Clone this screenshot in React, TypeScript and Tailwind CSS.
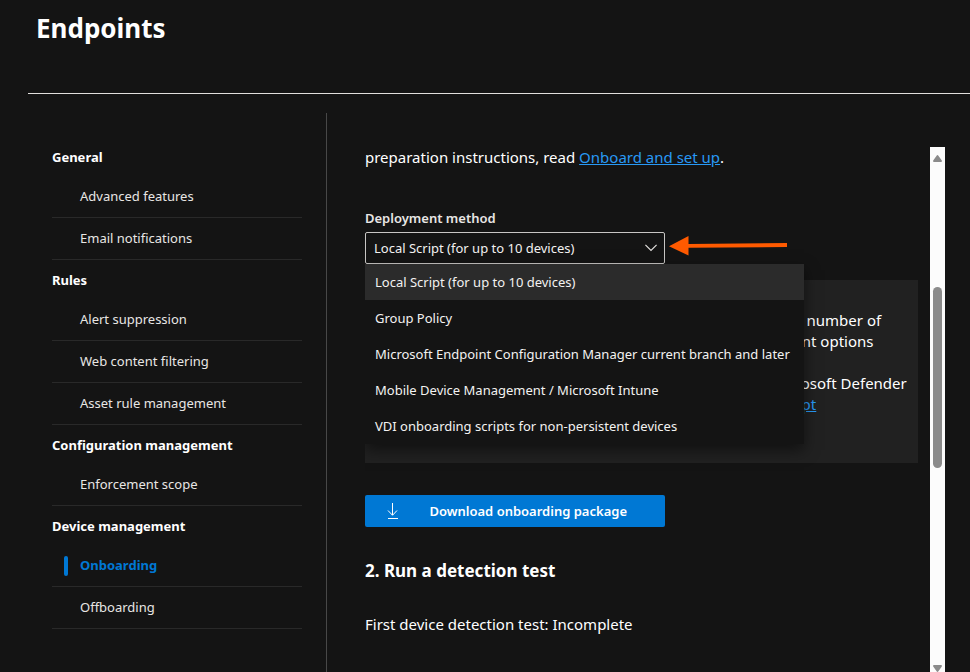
import { useState } from "react";

const navGroups = [
  { title: "General", items: ["Advanced features", "Email notifications"] },
  { title: "Rules", items: ["Alert suppression", "Web content filtering", "Asset rule management"] },
  { title: "Configuration management", items: ["Enforcement scope"] },
  { title: "Device management", items: ["Onboarding", "Offboarding"] },
];

const deploymentMethods = [
  "Local Script (for up to 10 devices)",
  "Group Policy",
  "Microsoft Endpoint Configuration Manager current branch and later",
  "Mobile Device Management / Microsoft Intune",
  "VDI onboarding scripts for non-persistent devices",
];

function SideNav({ active }: { active: string }) {
  return (
    <nav aria-label="Endpoint settings" className="w-[299px] shrink-0 border-r border-[#484848] px-6 pt-6">
      {navGroups.map((group) => (
        <section key={group.title}>
          <h2 className="flex h-[39px] items-center pt-0.5 text-[13px] font-bold text-white">{group.title}</h2>
          <ul>
            {group.items.map((item) => (
              <li key={item} className="flex h-[42px] items-center border-b border-[#292929]">
                {item === active ? (
                  <a href="#" aria-current="page" className="flex items-center gap-3 pl-3 font-bold text-[#0078d4]">
                    <span className="h-5 w-1 rounded-xs bg-[#0078d4]" />
                    {item}
                  </a>
                ) : (
                  <a href="#" className="pl-7 hover:text-white">{item}</a>
                )}
              </li>
            ))}
          </ul>
        </section>
      ))}
    </nav>
  );
}

function DeploymentPicker() {
  const [method, setMethod] = useState(deploymentMethods[0]);

  return (
    <div className="relative z-10 w-[300px] text-[13px]">
      <label htmlFor="method" className="block h-7 leading-7 font-semibold text-[#e8e6e4]">Deployment method</label>
      <div className="relative">
        <select
          id="method"
          value={method}
          onChange={(e) => setMethod(e.target.value)}
          className="block h-8 w-full appearance-none rounded-xs border border-[#c8c6c4] bg-[#141414] px-2 text-[#f3f2f1] outline-none"
        >
          {deploymentMethods.map((m) => (
            <option key={m}>{m}</option>
          ))}
        </select>
        <svg className="pointer-events-none absolute top-3 right-2 h-2 w-3" viewBox="0 0 12 8" fill="none" stroke="#e1dfdd" strokeWidth="1.2">
          <path d="M0.4 0.8 6 6.4 11.6 0.8" />
        </svg>
        <svg className="pointer-events-none absolute top-1 left-full h-5 w-[122px]" viewBox="0 0 122 20" fill="#ff5a00">
          <path d="M4 10.2 23.5 0V8L122 7V11L23.5 11.8V19.5Z" />
        </svg>
      </div>
      <ul role="listbox" aria-label="Deployment method" className="absolute top-full left-0 w-[439px] bg-[#141414] text-[#f3f2f1] shadow-[0_6px_14px_rgba(0,0,0,0.5)]">
        {deploymentMethods.map((m) => (
          <li key={m} role="option" aria-selected={m === method}>
            <button
              type="button"
              onClick={() => setMethod(m)}
              className={`block h-9 w-full px-[10px] text-left whitespace-nowrap ${m === method ? "bg-[#2b2b2b]" : "hover:bg-[#2b2b2b]"}`}
            >
              {m}
            </button>
          </li>
        ))}
      </ul>
    </div>
  );
}

function ScrollTrack() {
  return (
    <div aria-hidden="true" className="flex w-[15px] shrink-0 flex-col items-center bg-[#fcfcfc] pt-2">
      <svg className="h-[7px] w-[9px]" viewBox="0 0 9 7" fill="#8b8b8b">
        <path d="M4.5 0Q5 0 5.4 0.7L8.8 5.6Q9.3 7 8 7H1Q-.3 7 .2 5.6L3.6.7Q4 0 4.5 0Z" />
      </svg>
      <div className="mt-[125px] h-[181px] w-[9px] rounded-full bg-[#8b8b8b]" />
      <svg className="mt-auto h-[7px] w-[9px]" viewBox="0 0 9 7" fill="#8b8b8b">
        <path d="M4.5 7Q5 7 5.4 6.3L8.8 1.4Q9.3 0 8 0H1Q-.3 0 .2 1.4L3.6 6.3Q4 7 4.5 7Z" />
      </svg>
    </div>
  );
}

export default function App() {
  return (
    <div className="flex h-screen flex-col overflow-hidden bg-[#141414] font-['Segoe_UI','Noto_Sans',sans-serif] text-[13px] text-[#e8e6e4]">
      <header className="ml-7 h-[94px] shrink-0 border-b border-[#e1dfdd] pt-2 pl-2">
        <h1 className="text-[26px] leading-10 font-bold text-white">Endpoints</h1>
      </header>

      <div className="mt-[19px] ml-7 flex min-h-0 flex-1">
        <SideNav active="Onboarding" />

        <main className="mt-[34px] mr-[25px] ml-[38px] flex min-w-0 flex-1 gap-3">
          <div className="min-w-0 flex-1 overflow-hidden text-[15px] leading-[21px] text-white">
            <p className="mb-[36px]">
              preparation instructions, read <a href="#" className="text-[#2899f5] underline">Onboard and set up</a>.
            </p>

            <DeploymentPicker />

            <div className="mt-4 h-[183px] bg-[#212121] py-[30px] pl-3 whitespace-nowrap">
              <p>
                This script has been optimized for deployment with a limited number of<br />
                devices (1-10). To deploy at scale, please see other deployment options
              </p>
              <p className="mt-[21px]">
                For more information on how to configure and monitor Microsoft Defender<br />
                for Endpoint devices, see <a href="#" className="text-[#2899f5] underline">Configure devices using a local script</a>
              </p>
            </div>

            <button type="button" className="mt-8 flex h-8 w-[300px] items-center rounded-xs bg-[#0078d4] pr-[38px] pl-[22px] text-[13px] font-semibold text-white">
              <svg className="h-4 w-3 shrink-0" viewBox="0 0 12 16" fill="none" stroke="currentColor">
                <path d="M5.5 0V12M1 7.5 5.5 12.3 10 7.5M1 15.5H11" />
              </svg>
              <span className="flex-1 text-right">Download onboarding package</span>
            </button>

            <h2 className="mt-8 text-[17px] leading-6 font-bold">2. Run a detection test</h2>
            <p className="mt-[31px]">First device detection test: Incomplete</p>
          </div>

          <ScrollTrack />
        </main>
      </div>
    </div>
  );
}
